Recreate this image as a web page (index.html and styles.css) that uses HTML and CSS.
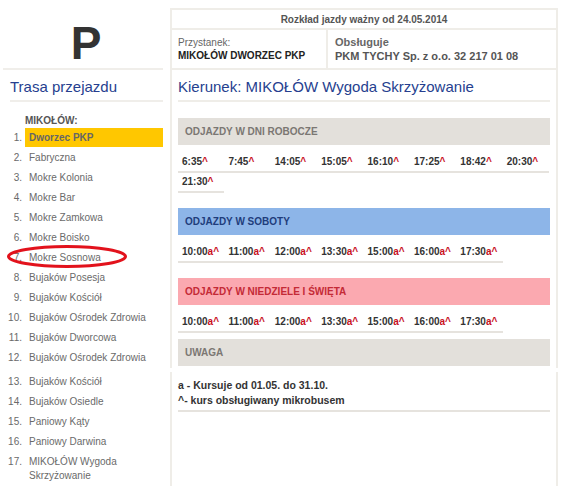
FILE: index.html
```html
<!DOCTYPE html>
<html lang="pl">
<head>
<meta charset="utf-8">
<title>Rozkład jazdy</title>
<link rel="stylesheet" href="styles.css">
</head>
<body>
<div class="page">
  <div class="band">
    <aside class="side">
      <div class="logo">P</div>
      <h2 class="side-title">Trasa przejazdu</h2>
      <div class="town">MIKOŁÓW:</div>
      <ol class="stops">
        <li class="stop"><span class="num">1.</span><span class="name active">Dworzec PKP</span></li>
        <li class="stop"><span class="num">2.</span><span class="name">Fabryczna</span></li>
        <li class="stop"><span class="num">3.</span><span class="name">Mokre Kolonia</span></li>
        <li class="stop"><span class="num">4.</span><span class="name">Mokre Bar</span></li>
        <li class="stop"><span class="num">5.</span><span class="name">Mokre Zamkowa</span></li>
        <li class="stop"><span class="num">6.</span><span class="name">Mokre Boisko</span></li>
        <li class="stop"><span class="num">7.</span><span class="name">Mokre Sosnowa</span></li>
        <li class="stop"><span class="num">8.</span><span class="name">Bujaków Posesja</span></li>
        <li class="stop"><span class="num">9.</span><span class="name">Bujaków Kościół</span></li>
        <li class="stop"><span class="num">10.</span><span class="name">Bujaków Ośrodek Zdrowia</span></li>
        <li class="stop"><span class="num">11.</span><span class="name">Bujaków Dworcowa</span></li>
        <li class="stop"><span class="num">12.</span><span class="name">Bujaków Ośrodek Zdrowia</span></li>
      </ol>
      <svg class="mark" width="122" height="25" viewBox="0 0 122 25">
        <ellipse cx="61" cy="12.5" rx="58.5" ry="10" fill="none" stroke="#e2121c" stroke-width="3"/>
      </svg>
    </aside>
    <main class="main">
      <div class="info">
        <div class="valid">Rozkład jazdy ważny od 24.05.2014</div>
        <div class="info-row">
          <div class="info-cell stopcell">
            <div class="lbl">Przystanek:</div>
            <div class="val">MIKOŁÓW DWORZEC PKP</div>
          </div>
          <div class="info-cell opcell">
            <div class="lbl-b">Obsługuje</div>
            <div class="val-b">PKM TYCHY Sp. z o.o. 32 217 01 08</div>
          </div>
        </div>
      </div>
      <h1 class="direction">Kierunek: MIKOŁÓW Wygoda Skrzyżowanie</h1>

      <div class="sec sec-gray">ODJAZDY W DNI ROBOCZE</div>
      <div class="times">
        <span class="t">6:35<i>^</i></span>
        <span class="t">7:45<i>^</i></span>
        <span class="t">14:05<i>^</i></span>
        <span class="t">15:05<i>^</i></span>
        <span class="t">16:10<i>^</i></span>
        <span class="t">17:25<i>^</i></span>
        <span class="t">18:42<i>^</i></span>
        <span class="t">20:30<i>^</i></span>
        <span class="t">21:30<i>^</i></span>
      </div>

      <div class="sec sec-blue">ODJAZDY W SOBOTY</div>
      <div class="times">
        <span class="t">10:00<i>a^</i></span>
        <span class="t">11:00<i>a^</i></span>
        <span class="t">12:00<i>a^</i></span>
        <span class="t">13:30<i>a^</i></span>
        <span class="t">15:00<i>a^</i></span>
        <span class="t">16:00<i>a^</i></span>
        <span class="t">17:30<i>a^</i></span>
      </div>

      <div class="sec sec-pink">ODJAZDY W NIEDZIELE I ŚWIĘTA</div>
      <div class="times">
        <span class="t">10:00<i>a^</i></span>
        <span class="t">11:00<i>a^</i></span>
        <span class="t">12:00<i>a^</i></span>
        <span class="t">13:30<i>a^</i></span>
        <span class="t">15:00<i>a^</i></span>
        <span class="t">16:00<i>a^</i></span>
        <span class="t">17:30<i>a^</i></span>
      </div>

      <div class="sec sec-gray sec-note">UWAGA</div>
    </main>
  </div>

  <div class="band band-2">
    <aside class="side">
      <ol class="stops">
        <li class="stop"><span class="num">13.</span><span class="name">Bujaków Kościół</span></li>
        <li class="stop"><span class="num">14.</span><span class="name">Bujaków Osiedle</span></li>
        <li class="stop"><span class="num">15.</span><span class="name">Paniowy Kąty</span></li>
        <li class="stop"><span class="num">16.</span><span class="name">Paniowy Darwina</span></li>
        <li class="stop"><span class="num">17.</span><span class="name">MIKOŁÓW Wygoda Skrzyżowanie</span></li>
      </ol>
    </aside>
    <main class="main">
      <div class="notes">
        <div>a - Kursuje od 01.05. do 31.10.</div>
        <div>^- kurs obsługiwany mikrobusem</div>
      </div>
    </main>
  </div>
</div>
</body>
</html>
```

FILE: styles.css
```css
html, body {
  margin: 0;
  padding: 0;
  background: #ffffff;
}

body {
  font-family: "Liberation Sans", Arial, sans-serif;
  color: #555;
}

.page {
  padding-top: 8px;
  width: 558px;
}

.band {
  display: flex;
  align-items: stretch;
}

.band-2 {
  margin-top: 4px;
}

.side {
  position: relative;
  width: 170px;
  flex: none;
}

.logo {
  height: 60px;
  margin: 0 7px 0 3px;
  border-bottom: 2px solid #f0eeea;
  font-size: 46px;
  font-weight: bold;
  color: #333;
  text-align: center;
  line-height: 70px;
  padding-left: 6px;
  box-sizing: content-box;
}

.side-title {
  margin: 7px 7px 0 10px;
  padding-bottom: 3px;
  border-bottom: 2px solid #f0eeea;
  font-size: 15px;
  line-height: 20px;
  font-weight: normal;
  color: #263f8f;
}

.town {
  margin: 12px 0 0 25px;
  font-size: 10px;
  line-height: 14px;
  font-weight: bold;
  color: #555;
}

.stops {
  list-style: none;
  margin: 0;
  padding: 0;
}

.stop {
  display: flex;
  font-size: 10px;
  line-height: 14px;
  color: #6a6a6a;
}

.num {
  width: 22px;
  flex: none;
  text-align: right;
  padding-top: 3px;
}

.name {
  flex: 1;
  margin: 0 7px 0 3px;
  padding: 3px 4px 3px 4px;
}

.name.active {
  background: #ffc700;
  font-weight: bold;
  color: #666;
  padding-bottom: 2px;
  margin-bottom: 1px;
}

.mark {
  position: absolute;
  left: 6px;
  top: 236px;
}

.main {
  flex: 1;
  border-left: 2px solid #efede8;
  border-right: 2px solid #efede8;
  padding: 0 6px;
}

.info {
  margin: 0 -6px;
  border-top: 2px solid #efede8;
  border-bottom: 2px solid #efede8;
}

.valid {
  height: 18px;
  line-height: 19px;
  text-align: center;
  font-size: 10px;
  font-weight: bold;
  color: #555;
  border-bottom: 2px solid #efede8;
}

.info-row {
  display: flex;
  height: 38px;
}

.info-cell {
  padding: 6px 6px 0;
}

.stopcell {
  width: 142px;
  border-right: 2px solid #efede8;
}

.opcell {
  padding-left: 7px;
}

.lbl {
  font-size: 10px;
  line-height: 13px;
  color: #666;
}

.val {
  font-size: 10px;
  line-height: 13px;
  font-weight: bold;
  color: #222;
}

.lbl-b {
  font-size: 11px;
  line-height: 13px;
  font-weight: bold;
  color: #666;
}

.val-b {
  font-size: 11px;
  line-height: 14px;
  font-weight: bold;
  color: #555;
}

.direction {
  margin: 7px 0 0;
  padding-bottom: 3px;
  border-bottom: 2px solid #efede8;
  font-size: 15px;
  line-height: 20px;
  font-weight: normal;
  color: #263f8f;
}

.sec {
  height: 27px;
  line-height: 27px;
  padding-left: 7px;
  font-size: 10px;
  font-weight: bold;
  margin-top: 15px;
}

.direction + .sec {
  margin-top: 16px;
}

.sec-gray {
  background: #e3e0db;
  color: #7b7773;
}

.sec-blue {
  background: #8db5e8;
  color: #1f3d7c;
}

.sec-pink {
  background: #fba9b0;
  color: #c42a36;
}

.sec-note {
  margin-top: 6px;
}

.times {
  display: flex;
  flex-wrap: wrap;
  margin-top: 8px;
}

.t {
  width: 46.4px;
  box-sizing: border-box;
  padding-left: 4px;
  height: 20px;
  line-height: 18px;
  border-bottom: 2px solid #e6e3de;
  font-size: 10px;
  font-weight: bold;
  color: #333;
  white-space: nowrap;
}

.t i {
  font-style: normal;
  color: #c8101e;
}

.notes {
  margin-top: 6px;
  padding-bottom: 2px;
  border-bottom: 2px solid #e6e3de;
  font-size: 10.5px;
  line-height: 15px;
  font-weight: bold;
  color: #333;
}
```
